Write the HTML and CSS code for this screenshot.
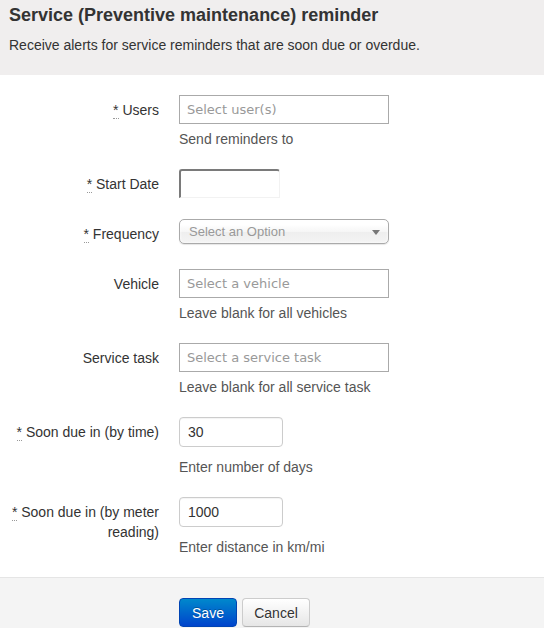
FILE: index.html
```html
<!DOCTYPE html>
<html lang="en">
<head>
<meta charset="utf-8">
<title>Service reminder</title>
<link rel="stylesheet" href="styles.css">
</head>
<body>
<header class="hdr">
  <h1 class="hdr-title">Service (Preventive maintenance) reminder</h1>
  <p class="hdr-sub">Receive alerts for service reminders that are soon due or overdue.</p>
</header>
<form class="form">
  <div class="row">
    <label class="lbl"><abbr class="req" title="required">*</abbr> Users</label>
    <div class="ctl">
      <input class="inp wide" type="text" placeholder="Select user(s)">
      <p class="help">Send reminders to</p>
    </div>
  </div>
  <div class="row">
    <label class="lbl"><abbr class="req" title="required">*</abbr> Start Date</label>
    <div class="ctl">
      <input class="date-box" type="text">
    </div>
  </div>
  <div class="row">
    <label class="lbl"><abbr class="req" title="required">*</abbr> Frequency</label>
    <div class="ctl">
      <div class="sel"><span class="sel-text">Select an Option</span><span class="sel-arrow"></span></div>
    </div>
  </div>
  <div class="row">
    <label class="lbl">Vehicle</label>
    <div class="ctl">
      <input class="inp wide" type="text" placeholder="Select a vehicle">
      <p class="help">Leave blank for all vehicles</p>
    </div>
  </div>
  <div class="row">
    <label class="lbl">Service task</label>
    <div class="ctl">
      <input class="inp wide" type="text" placeholder="Select a service task">
      <p class="help">Leave blank for all service task</p>
    </div>
  </div>
  <div class="row">
    <label class="lbl"><abbr class="req" title="required">*</abbr> Soon due in (by time)</label>
    <div class="ctl">
      <input class="num" type="text" value="30">
      <p class="help help-far">Enter number of days</p>
    </div>
  </div>
  <div class="row">
    <label class="lbl"><abbr class="req" title="required">*</abbr> Soon due in (by meter reading)</label>
    <div class="ctl">
      <input class="num" type="text" value="1000">
      <p class="help help-far">Enter distance in km/mi</p>
    </div>
  </div>
  <div class="actions">
    <button class="btn btn-primary" type="button">Save</button>
    <button class="btn btn-default" type="button">Cancel</button>
  </div>
</form>
</body>
</html>
```
FILE: styles.css
```css
html, body {
  margin: 0;
  padding: 0;
  background: #ffffff;
}
body {
  font-family: "Liberation Sans", Arial, sans-serif;
  font-size: 14px;
  line-height: 20px;
  color: #333333;
}
.hdr {
  background: #f0eeee;
  padding: 5px 9px 20px;
}
.hdr-title {
  margin: 0;
  font-size: 18px;
  line-height: 20px;
  font-weight: bold;
  color: #333333;
}
.hdr-sub {
  margin: 10px 0 0;
  font-size: 14px;
  line-height: 20px;
  color: #333333;
}
.form {
  margin: 0;
  padding-top: 20px;
}
.row {
  display: grid;
  grid-template-columns: 151px 1fr;
  column-gap: 20px;
  margin: 0 0 20px 8px;
  min-height: 30px;
}
.lbl {
  text-align: right;
  padding-top: 5px;
  color: #333333;
}
.req {
  text-decoration: none;
  border-bottom: 1px dotted #999999;
  cursor: help;
}
.ctl {
  display: flex;
  flex-direction: column;
  align-items: flex-start;
}
.inp {
  box-sizing: border-box;
  height: 29px;
  margin: 0;
  border: 1px solid #aaaaaa;
  border-radius: 0;
  padding: 0 7px;
  background: #ffffff;
  font-family: "DejaVu Sans", Verdana, sans-serif;
  font-size: 13px;
  color: #333333;
  outline: none;
}
.inp::placeholder {
  color: #999999;
}
.wide {
  width: 210px;
}
.help {
  margin: 5px 0 0;
  color: #555555;
}
.help-far {
  margin-top: 10px;
}
.date-box {
  box-sizing: border-box;
  width: 101px;
  height: 29px;
  margin: 0;
  padding: 0 6px;
  border-top: 2px solid #7a7a7a;
  border-left: 2px solid #7a7a7a;
  border-right: 1px solid #f2f2f2;
  border-bottom: 1px solid #f2f2f2;
  border-radius: 3px 3px 0 0;
  background: #ffffff;
  outline: none;
}
.sel {
  box-sizing: border-box;
  width: 210px;
  height: 25px;
  display: flex;
  align-items: center;
  justify-content: space-between;
  padding: 0 8px 0 9px;
  border: 1px solid #aaaaaa;
  border-radius: 5px;
  background: linear-gradient(#ffffff 20%, #f6f6f6 50%, #eeeeee 52%, #f4f4f4 100%);
  box-shadow: 0 0 3px #ffffff inset, 0 1px 1px rgba(0, 0, 0, 0.1);
  font-size: 13px;
  line-height: 20px;
}
.sel-text {
  color: #999999;
}
.sel-arrow {
  width: 0;
  height: 0;
  border-left: 4px solid transparent;
  border-right: 4px solid transparent;
  border-top: 5px solid #777777;
  margin-top: 1px;
}
.num {
  box-sizing: border-box;
  width: 104px;
  height: 30px;
  margin: 0;
  padding: 0 8px;
  border: 1px solid #cccccc;
  border-radius: 4px;
  background: #ffffff;
  font-family: "Liberation Sans", Arial, sans-serif;
  font-size: 14px;
  color: #333333;
  outline: none;
  box-shadow: inset 0 1px 1px rgba(0, 0, 0, 0.05);
}
.actions {
  display: flex;
  gap: 5px;
  border-top: 1px solid #e5e5e5;
  background: #f4f4f4;
  padding: 20px 0 20px 179px;
}
.btn {
  box-sizing: border-box;
  height: 29px;
  margin: 0;
  padding: 0;
  border-radius: 4px;
  font-family: "Liberation Sans", Arial, sans-serif;
  font-size: 14px;
  line-height: 20px;
  text-align: center;
  cursor: pointer;
}
.btn-primary {
  width: 58px;
  color: #ffffff;
  border: 1px solid #0044b3;
  background: linear-gradient(#0088cc, #0044cc);
  text-shadow: 0 -1px 0 rgba(0, 0, 0, 0.25);
}
.btn-default {
  width: 68px;
  color: #333333;
  border: 1px solid #cccccc;
  border-bottom-color: #b3b3b3;
  background: linear-gradient(#ffffff, #e6e6e6);
  text-shadow: 0 1px 1px rgba(255, 255, 255, 0.75);
}
```
